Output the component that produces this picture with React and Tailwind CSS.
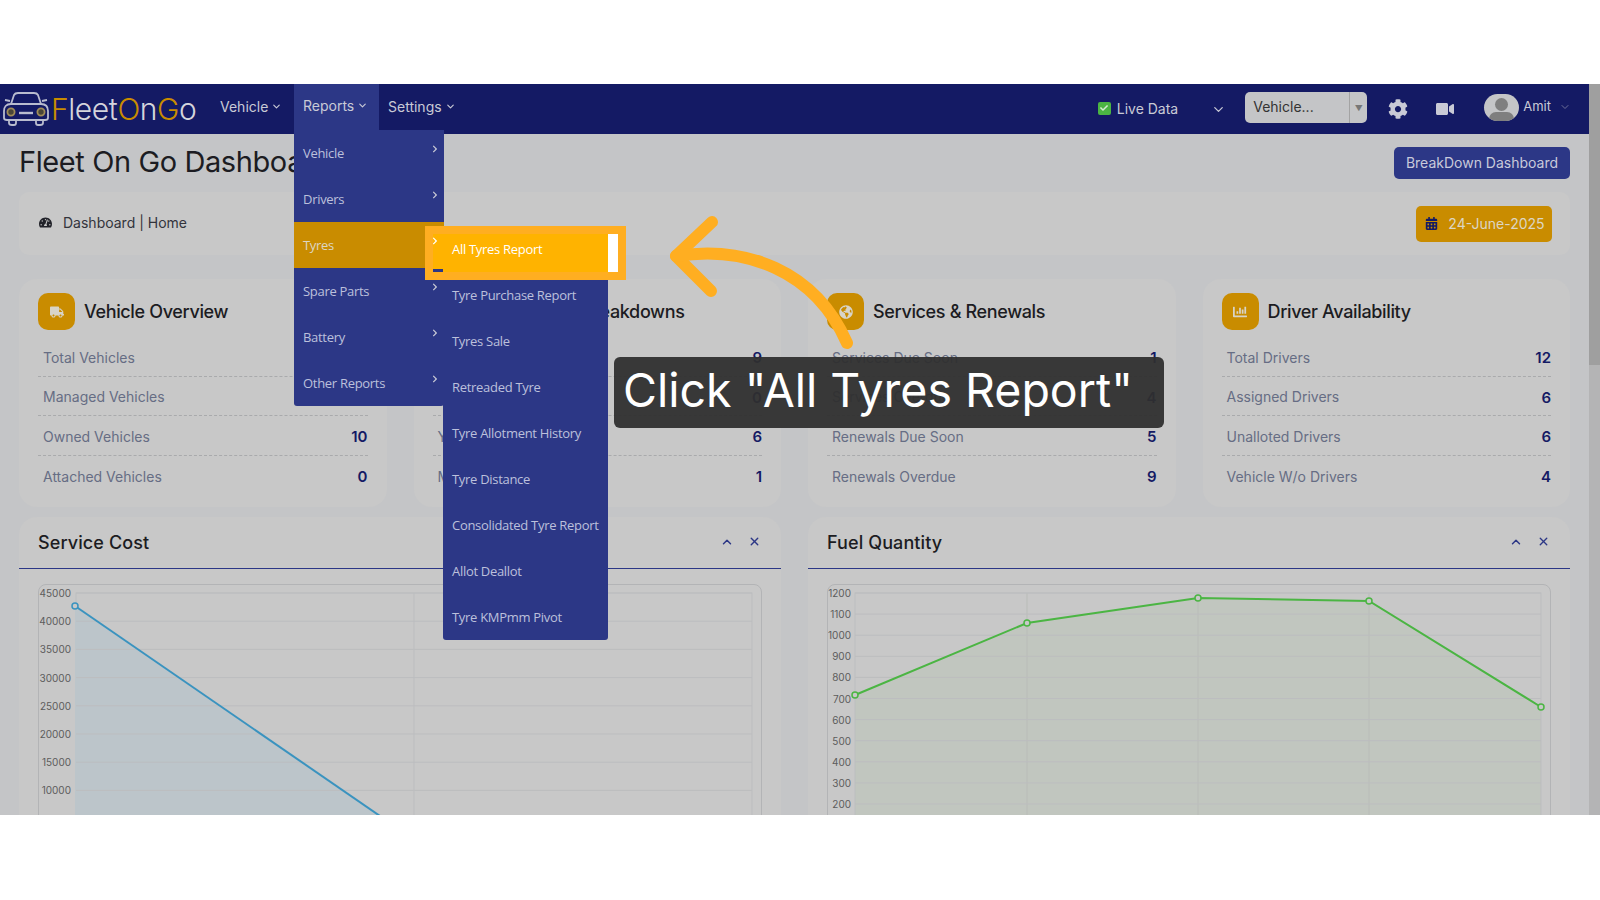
import React from 'react';
import { FaCog, FaVideo, FaCalendarAlt, FaTachometerAlt, FaTruck, FaChartBar, FaCheck, FaChevronRight, FaGlobeAmericas } from 'react-icons/fa';
import { ChevronDown, ChevronUp, X } from 'lucide-react';

const poppins = 'font-["Inter","Noto_Sans",sans-serif]';

const statCards = [
  {
    title: 'Vehicle Overview',
    icon: <FaTruck />,
    rows: [['Total Vehicles', '10'], ['Managed Vehicles', '0'], ['Owned Vehicles', '10'], ['Attached Vehicles', '0']],
  },
  {
    title: 'Accidents & Breakdowns',
    icon: <FaTruck />,
    rows: [['Open Breakdowns', '9'], ['Closed Breakdowns', '0'], ['Yard Vehicles', '6'], ['Minor Breakdowns', '1']],
  },
  {
    title: 'Services & Renewals',
    icon: <FaGlobeAmericas />,
    rows: [['Services Due Soon', '1'], ['Services Overdue', '4'], ['Renewals Due Soon', '5'], ['Renewals Overdue', '9']],
  },
  {
    title: 'Driver Availability',
    icon: <FaChartBar />,
    rows: [['Total Drivers', '12'], ['Assigned Drivers', '6'], ['Unalloted Drivers', '6'], ['Vehicle W/o Drivers', '4']],
  },
];

const mainMenu = ['Vehicle', 'Drivers', 'Tyres', 'Spare Parts', 'Battery', 'Other Reports'];
const tyreMenu = [
  'All Tyres Report',
  'Tyre Purchase Report',
  'Tyres Sale',
  'Retreaded Tyre',
  'Tyre Allotment History',
  'Tyre Distance',
  'Consolidated Tyre Report',
  'Allot Deallot',
  'Tyre KMPmm Pivot',
];

const NavLink = ({ label }) => (
  <div className="flex items-center gap-[3px] text-[14px] text-[#c9cad6]">
    {label}
    <ChevronDown size={11} strokeWidth={2.5} />
  </div>
);

const CarLogo = () => (
  <svg viewBox="0 0 46 34" className="w-[46px] h-[34px]" fill="none" stroke="#b9bccf" strokeWidth="1.8">
    <path d="M8 12 L11 3 Q12 1 15 1 H31 Q34 1 35 3 L38 12" />
    <path d="M8 12 C3 12 1 15 1 19 V26 Q1 28 4 28 H42 Q45 28 45 26 V19 C45 15 43 12 38 12 Z" />
    <path d="M7 9 L2 8 M39 9 L44 8" />
    <path d="M6 28 V31 Q6 33 9 33 H11 Q13 33 13 31 V28 M33 28 V31 Q33 33 35 33 H37 Q40 33 40 31 V28" />
    <path d="M16 21 H30" strokeWidth="2.4" />
    <circle cx="8" cy="20" r="3.6" fill="#4a4638" stroke="#a08c58" />
    <circle cx="38" cy="20" r="3.6" fill="#4a4638" stroke="#a08c58" />
  </svg>
);

const Navbar = () => (
  <div className={`h-[50px] bg-[#141a64] flex items-center shrink-0 ${poppins}`}>
    <div className="ml-[3px] flex items-center w-[217px]">
      <CarLogo />
      <span className="ml-[2px] text-[30px] font-light tracking-[-0.4px] leading-none text-[#d4d5dc]">
        <span className="text-[#c98c00]">F</span>leet<span className="text-[#c98c00]">O</span>n<span className="text-[#c98c00]">G</span>o
      </span>
    </div>
    <div className="w-[74px] -mt-[6px]"><NavLink label="Vehicle" /></div>
    <div className="w-[85px] h-full bg-[#2c3786] pl-[9px] pb-[8px] flex items-center"><NavLink label="Reports" /></div>
    <div className="ml-[9px] -mt-[6px]"><NavLink label="Settings" /></div>

    <div className="ml-auto flex items-center">
      <div className="-mt-[2px] w-[13px] h-[13px] rounded-[2px] bg-[#4bb543] flex items-center justify-center text-[#d4ecd2] text-[8px]"><FaCheck /></div>
      <span className="ml-[6px] -mt-[2px] text-[14px] text-[#c9cad6]">Live Data</span>
      <ChevronDown size={15} strokeWidth={2} className="ml-[33px] text-[#c9cad6]" />
      <div className="ml-[19px] -mt-[3px] w-[122px] h-[31px] rounded-[5px] bg-[#c4c5c7] flex items-center text-[14px] text-[#333]">
        <span className="pl-[8px] pb-[2px] flex-1">Vehicle...</span>
        <div className="w-[18px] h-full border-l border-[#a3a3a3] flex items-center justify-center text-[8px] text-[#777]">▼</div>
      </div>
      <FaCog className="ml-[21px] text-[20px] text-[#c9cad6]" />
      <FaVideo className="ml-[28px] text-[18px] text-[#c9cad6]" />
      <div className="ml-[30px] -mt-[3px] w-[35px] h-[27px] rounded-full bg-[#c4c5c7] overflow-hidden relative">
        <div className="absolute left-[11px] top-[4px] w-[13px] h-[13px] rounded-full bg-[#7f7f7f]" />
        <div className="absolute left-[5px] top-[18px] w-[25px] h-[14px] rounded-full bg-[#7f7f7f]" />
      </div>
      <span className="ml-[4px] -mt-[5px] text-[13px] text-[#c9cad6]">Amit</span>
      <ChevronDown size={12} className="ml-[8px] mr-[18px] -mt-[4px] text-[#6d7099]" />
    </div>
  </div>
);

const StatCard = ({ title, icon, rows }) => (
  <div className="bg-[#c8c8c8] rounded-[18px] h-[228px] px-[19px] pt-[14px]">
    <div className="flex items-center gap-[9px]">
      <div className="w-[37px] h-[37px] rounded-[10px] bg-[#c98c00] flex items-center justify-center text-[14px] text-[#d8d4c8]">{icon}</div>
      <div className="text-[18px] font-medium tracking-[-0.35px] text-[#1c1c22] whitespace-nowrap">{title}</div>
    </div>
    <div className="mt-[7px]">
      {rows.map(([label, value], i) => (
        <div key={label} className={`h-[39.5px] pt-[2px] flex items-center justify-between pl-[5px] ${i < 3 ? 'border-b border-dashed border-[#a9aaac]' : ''}`}>
          <span className="text-[14px] text-[#666d84]">{label}</span>
          <span className="mt-[2px] text-[15px] font-semibold text-[#141a64]">{value}</span>
        </div>
      ))}
    </div>
  </div>
);

const ChartCard = ({ title, children }) => (
  <div className="bg-[#c8c8c8] rounded-t-[18px] flex-1 min-w-0">
    <div className="h-[52px] pl-[19px] pr-[20px] flex items-center justify-between border-b-[1.5px] border-[#2c3786]">
      <div className="text-[18px] font-medium tracking-[0.1px] text-[#1c1c22]">{title}</div>
      <div className="flex items-center gap-[14px] text-[#2c3786] -mt-[2px]">
        <ChevronUp size={14} strokeWidth={2.5} />
        <X size={13} strokeWidth={2.5} />
      </div>
    </div>
    <div className="mx-[19px] mt-[15px] h-[300px] rounded-[8px] border-[1.5px] border-[#b3b4b6] overflow-hidden">
      {children}
    </div>
  </div>
);

const ServiceChart = () => {
  const labels = ['45000', '40000', '35000', '30000', '25000', '20000', '15000', '10000', '5000'];
  return (
    <svg width="723" height="300" className="block">
      <rect x="37" y="8" width="676" height="292" fill="none" stroke="#bcbdbf" />
      <line x1="375" y1="8" x2="375" y2="300" stroke="#bcbdbf" />
      <polygon points="36,21 341,231 341,300 36,300" fill="#bcc5ca" />
      {labels.map((t, i) => (
        <g key={t}>
          <line x1="37" x2="713" y1={8 + i * 28.2} y2={8 + i * 28.2} stroke="#bcbdbf" />
          <text x="32" y={12 + i * 28.2} textAnchor="end" fontSize="10" fill="#5c5c5c" fontFamily="Inter">{t}</text>
        </g>
      ))}
      <line x1="36" y1="21" x2="341" y2="231" stroke="#3a93bf" strokeWidth="2" />
      <circle cx="36" cy="21" r="3" fill="#c8c8c8" stroke="#3a93bf" strokeWidth="1.5" />
    </svg>
  );
};

const FuelChart = () => {
  const labels = ['1200', '1100', '1000', '900', '800', '700', '600', '500', '400', '300', '200'];
  const pts = [[27, 110], [199, 38], [370, 13], [541, 16], [713, 122]];
  const line = pts.map(p => p.join(',')).join(' ');
  return (
    <svg width="723" height="300" className="block">
      <polygon points={`${line} 713,300 27,300`} fill="#c1c6bf" />
      <rect x="27" y="8" width="686" height="292" fill="none" stroke="#bcbdbf" />
      {[199, 370, 541].map(x => <line key={x} x1={x} x2={x} y1="8" y2="300" stroke="#b9bcb8" />)}
      {labels.map((t, i) => (
        <g key={t}>
          <line x1="27" x2="713" y1={8 + i * 21.1} y2={8 + i * 21.1} stroke="#bcbdbf" />
          <text x="23" y={12 + i * 21.1} textAnchor="end" fontSize="10" fill="#5c5c5c" fontFamily="Inter">{t}</text>
        </g>
      ))}
      <polyline points={line} fill="none" stroke="#4bb543" strokeWidth="2" />
      {pts.map(([x, y]) => <circle key={x} cx={x} cy={y} r="3" fill="#c8c8c8" stroke="#4bb543" strokeWidth="1.5" />)}
    </svg>
  );
};

// dropdown, highlight box, arrow and caption all sit over the page
const ReportsMenu = () => (
  <div className="absolute left-[294px] top-[46px] w-[150px] bg-[#2c3786] rounded-b-[3px] font-['Open_Sans',sans-serif]">
    {mainMenu.map(item => (
      <div key={item} className={`h-[46px] pt-[2px] pl-[9px] pr-[5px] flex items-center justify-between text-[13px] tracking-[-0.3px] text-[#bcc0dc] ${item === 'Tyres' ? 'bg-[#c98c00] text-[#dcd6c4]' : ''}`}>
        {item}
        <FaChevronRight className="text-[8px] -mt-[10px] text-[#c9cad6]" />
      </div>
    ))}
  </div>
);

const TyresMenu = () => (
  <div className="absolute left-[443px] top-[142px] w-[165px] bg-[#2c3786] rounded-b-[3px] font-['Open_Sans',sans-serif]">
    {tyreMenu.map(item => (
      <div key={item} className="h-[46px] pt-[2px] pl-[9px] flex items-center text-[13px] tracking-[-0.3px] text-[#bcc0dc] whitespace-nowrap">{item}</div>
    ))}
  </div>
);

const Highlight = () => (
  <div className="absolute left-[425px] top-[142px] w-[201px] h-[54px] bg-[#ffb300] border-[8px] border-[#ffae21] font-['Open_Sans',sans-serif]">
    <FaChevronRight className="absolute -left-[2px] top-[3px] text-[8px] text-white" />
    <div className="absolute left-0 bottom-0 w-[10px] h-[3px] bg-[#2c3786]" />
    <div className="absolute left-[19px] top-[6px] text-[13px] tracking-[-0.3px] text-white">All Tyres Report</div>
    <div className="absolute right-0 top-0 w-[10px] h-full bg-white" />
  </div>
);

const Arrow = () => (
  <svg className="absolute left-[660px] top-[130px]" width="200" height="230" viewBox="660 214 200 230" fill="none" stroke="#ffae21" strokeWidth="12" strokeLinecap="round" strokeLinejoin="round">
    <path d="M712 222 L676 256 L711 291" />
    <path d="M676 256 C745 245 815 270 847 343" />
  </svg>
);

const App = () => (
  <div className="w-[1600px] h-[900px] bg-white overflow-hidden">
    <div className="h-[84px]" />
    <div className={`relative h-[731px] flex overflow-hidden bg-[#c4c5c7] ${poppins}`}>
      <div className="w-[1589px] flex flex-col">
        <Navbar />
        <div className="px-[19px]">
          <div className="h-[58px] flex items-center justify-between">
            <div className="flex items-baseline -mt-[2px]">
              <span className="text-[29px] tracking-[-0.4px] text-[#1c1c22]">Fleet On Go Dashboard</span>
              <span className="ml-[10px] text-[14px] text-[#6d7284]">Fleet</span>
            </div>
            <button className="h-[32px] w-[176px] pb-[2px] rounded-[5px] bg-[#2c3786] text-[14px] text-[#c8cadb]">BreakDown Dashboard</button>
          </div>
          <div className="h-[63px] rounded-[10px] bg-[#c8c8c8] flex items-center justify-between pl-[20px] pr-[18px]">
            <div className="flex items-center gap-[11px] pb-[2px] text-[14px] text-[#33343c]">
              <FaTachometerAlt className="text-[13px] text-[#22232a]" />
              Dashboard | Home
            </div>
            <div className="h-[36px] w-[136px] pb-[1px] pl-[2px] rounded-[5px] bg-[#c98c00] flex items-center justify-center gap-[10px] text-[14px] text-[#dcd6c4]">
              <FaCalendarAlt className="text-[13px] text-[#141a64]" />
              24-June-2025
            </div>
          </div>
          <div className="mt-[24px] grid grid-cols-4 gap-[27px]">
            {statCards.map(c => <StatCard key={c.title} {...c} />)}
          </div>
          <div className="mt-[10px] flex gap-[27px]">
            <ChartCard title="Service Cost"><ServiceChart /></ChartCard>
            <ChartCard title="Fuel Quantity"><FuelChart /></ChartCard>
          </div>
        </div>
      </div>
      <div className="flex-1 bg-[#b4b4b5]">
        <div className="h-[281px] bg-[#9f9f9f]" />
      </div>

      <ReportsMenu />
      <TyresMenu />
      <Highlight />
      <Arrow />
      <div className="absolute left-[614px] top-[273px] w-[550px] h-[71px] pl-[9px] pb-[3px] rounded-[6px] bg-[#2f2f2f]/[.94] flex items-center text-[46.5px] text-white whitespace-nowrap">
        Click "All Tyres Report"
      </div>
    </div>
  </div>
);

export default App;
